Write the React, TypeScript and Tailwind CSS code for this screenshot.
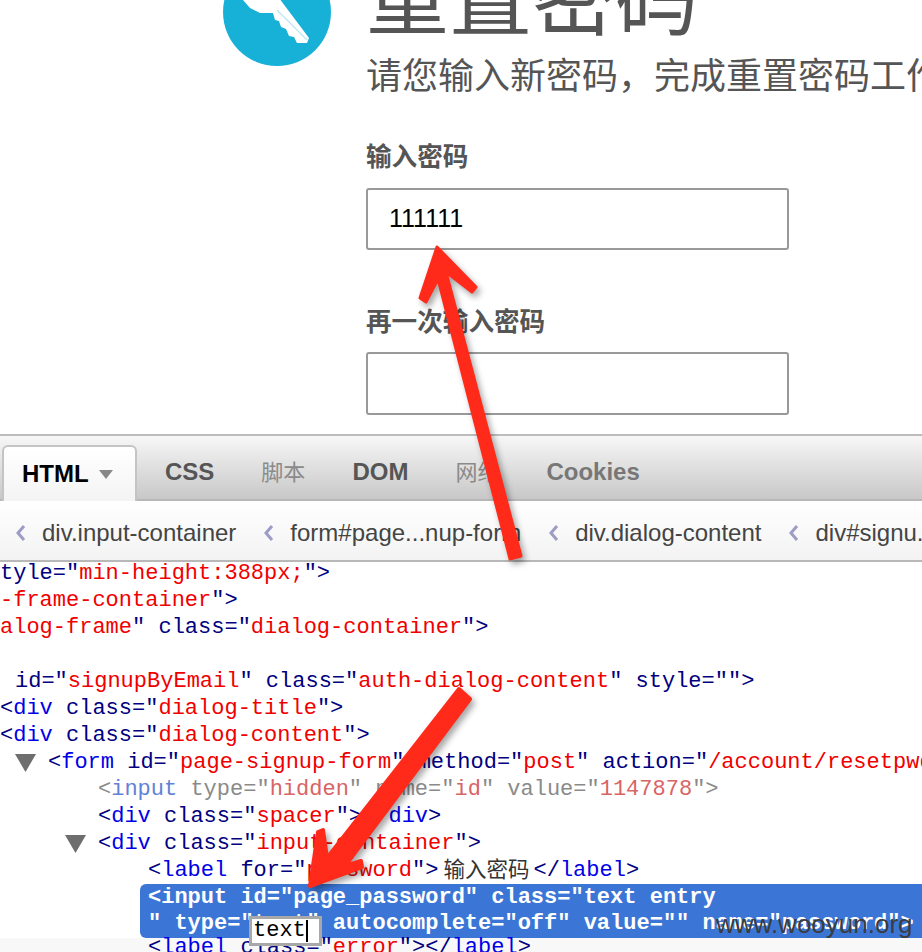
const sans = "font-['Liberation_Sans','Noto_Sans_CJK_SC',sans-serif]"

// colour helpers for the html panel
const Br = ({ children }: { children: React.ReactNode }) => <span className="text-[#000080]">{children}</span>
const Tag = ({ children }: { children: React.ReactNode }) => <span className="text-[#0000e8]">{children}</span>
const Val = ({ children }: { children: React.ReactNode }) => <span className="text-[#f00000]">{children}</span>

function Crumb({ label }: { label: string }) {
  return (
    <div className="flex items-center gap-[16px] shrink-0">
      <svg width="10" height="16" viewBox="0 0 10 16" className="shrink-0">
        <path d="M8 1 L2 8 L8 15" fill="none" stroke="#9c9cc4" strokeWidth="3" />
      </svg>
      <span>{label}</span>
    </div>
  )
}

function Triangle() {
  return (
    <svg width="21" height="18" viewBox="0 0 21 18" className="absolute left-[65px] top-[5px]">
      <path d="M0 0 H21 L10.5 18 Z" fill="#6e6e6e" />
    </svg>
  )
}

function Row({ indent, children }: { indent: string; children?: React.ReactNode }) {
  return <div className={`h-[27px] leading-[27px] whitespace-pre ${indent}`}>{children}</div>
}

export default function App() {
  return (
    <div className={`relative w-[922px] h-[952px] overflow-hidden bg-white ${sans}`}>
      {/* Reset password form */}
      <div className="flex h-[476px] pl-[223px] mt-[-42px]">
        <svg width="108" height="108" viewBox="223 -42 108 108" className="shrink-0">
          <circle cx="277" cy="12" r="54" fill="#17b0d6" />
          <path
            d="M236 -14 L243 0 L250 8 L260 13 L273 13 L275 20 L279 21 L281 27 L286 29 L289 36 L294 37 L297 43 L307 43 L309 38 L288 10 L282 2 L270 -14 Z"
            fill="#ffffff"
          />
          <path d="M277 10 L307 40" stroke="#bfe8f3" strokeWidth="1.5" />
        </svg>
        <div className="ml-[-108px] pl-[143px] flex flex-col w-[699px] shrink-0">
          <h1 className="text-[83px] leading-[82px] mt-[2px] text-[#555] font-normal whitespace-nowrap">重置密码</h1>
          <p className="text-[36px] leading-[44px] mt-[13px] text-[#555] whitespace-nowrap">请您输入新密码，完成重置密码工作</p>
          <label className="text-[25.6px] leading-[34px] mt-[41px] text-[#555] font-bold whitespace-nowrap">输入密码</label>
          <div className="mt-[14px] w-[423px] h-[62px] shrink-0 border-2 border-[#999] rounded-[3px] pl-[21px] flex items-center text-[25px] text-black">111111</div>
          <label className="text-[25.6px] leading-[34px] mt-[55px] text-[#555] font-bold whitespace-nowrap">再一次输入密码</label>
          <div className="mt-[13px] w-[423px] h-[63px] shrink-0 border-2 border-[#999] rounded-[3px]" />
        </div>
      </div>

      {/* Firebug tab bar */}
      <div className="h-[67px] border-t-2 border-b-2 border-t-[#bdbdbd] border-b-[#b8b8b8] bg-gradient-to-b from-[#f7f7f7] to-[#c8c8c8] flex items-end pl-[2px]">
        <div className="relative mb-[-2px] h-[56px] w-[135px] rounded-t-[6px] border-2 border-b-0 border-[#c4c4c4] bg-gradient-to-b from-white to-[#f4f4f4] flex items-center pl-[18px] gap-[10px]">
          <span className="text-[24px] font-bold text-black">HTML</span>
          <span className="w-0 h-0 border-l-[7px] border-r-[7px] border-t-[9px] border-l-transparent border-r-transparent border-t-[#888]" />
        </div>
        <div className="flex h-[54px] items-center text-[24px] font-bold ml-[28px] gap-[47px] text-[#555]">
          <span>CSS</span>
          <span className="text-[22px] font-normal text-[#8a8a8a]">脚本</span>
          <span>DOM</span>
          <span className="text-[22px] font-normal text-[#8a8a8a]">网络</span>
          <span className="text-[#777]">Cookies</span>
        </div>
      </div>

      {/* Breadcrumbs */}
      <div className="h-[61px] border-b-2 border-b-[#b8b8b8] bg-gradient-to-b from-white to-[#f3f3f3] flex items-center pl-[16px] pt-[4px] gap-[28px] text-[24px] text-[#444] whitespace-nowrap overflow-hidden">
        <Crumb label="div.input-container" />
        <Crumb label="form#page...nup-form" />
        <Crumb label="div.dialog-content" />
        <Crumb label="div#signu..." />
      </div>

      {/* Html tree */}
      <div className="mt-[-2px] text-[22px] font-['Liberation_Mono','Noto_Sans_CJK_SC',monospace]">
        <Row indent="pl-0"><Br>tyle=&quot;</Br><Val>min-height:388px;</Val><Br>&quot;&gt;</Br></Row>
        <Row indent="pl-0"><Val>-frame-container</Val><Br>&quot;&gt;</Br></Row>
        <Row indent="pl-0"><Val>alog-frame</Val><Br>&quot; class=&quot;</Br><Val>dialog-container</Val><Br>&quot;&gt;</Br></Row>
        <Row indent="pl-0" />
        <Row indent="pl-[15px]"><Br>id=&quot;</Br><Val>signupByEmail</Val><Br>&quot; class=&quot;</Br><Val>auth-dialog-content</Val><Br>&quot; style=&quot;&quot;&gt;</Br></Row>
        <Row indent="pl-0"><Br>&lt;</Br><Tag>div</Tag><Br> class=&quot;</Br><Val>dialog-title</Val><Br>&quot;&gt;</Br></Row>
        <Row indent="pl-0"><Br>&lt;</Br><Tag>div</Tag><Br> class=&quot;</Br><Val>dialog-content</Val><Br>&quot;&gt;</Br></Row>
        <div className="relative">
          <svg width="21" height="18" viewBox="0 0 21 18" className="absolute left-[15px] top-[5px]">
            <path d="M0 0 H21 L10.5 18 Z" fill="#6e6e6e" />
          </svg>
          <Row indent="pl-[48px]"><Br>&lt;</Br><Tag>form</Tag><Br> id=&quot;</Br><Val>page-signup-form</Val><Br>&quot; method=&quot;</Br><Val>post</Val><Br>&quot; action=&quot;</Br><Val>/account/resetpwd</Val></Row>
        </div>
        <Row indent="pl-[98px]">
          <span className="text-[#8a8a8a]">&lt;</span><span className="text-[#5f82d8]">input</span>
          <span className="text-[#8a8a8a]"> type=&quot;</span><span className="text-[#d86464]">hidden</span>
          <span className="text-[#8a8a8a]">&quot; name=&quot;</span><span className="text-[#d86464]">id</span>
          <span className="text-[#8a8a8a]">&quot; value=&quot;</span><span className="text-[#d86464]">1147878</span>
          <span className="text-[#8a8a8a]">&quot;&gt;</span>
        </Row>
        <Row indent="pl-[98px]"><Br>&lt;</Br><Tag>div</Tag><Br> class=&quot;</Br><Val>spacer</Val><Br>&quot;&gt;&lt;/</Br><Tag>div</Tag><Br>&gt;</Br></Row>
        <div className="relative">
          <Triangle />
          <Row indent="pl-[98px]"><Br>&lt;</Br><Tag>div</Tag><Br> class=&quot;</Br><Val>input-container</Val><Br>&quot;&gt;</Br></Row>
        </div>
        <div className="h-[27px] leading-[27px] whitespace-pre pl-[148px] flex items-center">
          <Br>&lt;</Br><Tag>label</Tag><Br> for=&quot;</Br><Val>password</Val><Br>&quot;&gt;</Br>
          <span className={`ml-[5px] mr-[4px] text-[21.5px] leading-[27px] text-[#333] ${sans}`}>输入密码</span>
          <Br>&lt;/</Br><Tag>label</Tag><Br>&gt;</Br>
        </div>
        <div className="ml-[140px] h-[54px] pl-[8px] rounded-l-[6px] bg-[#3b76d6] text-white font-bold">
          <div className="h-[27px] leading-[27px] whitespace-pre">&lt;input id=&quot;page_password&quot; class=&quot;text entry</div>
          <div className="h-[27px] leading-[26px] whitespace-pre">&quot; type=&quot;text&quot; autocomplete=&quot;off&quot; value=&quot;&quot; name=&quot;password&quot;&gt;</div>
        </div>
        <div className="bg-[#f8f8f8]">
          <div className="h-[27px] leading-[20px] whitespace-pre pl-[148px]"><Br>&lt;</Br><Tag>label</Tag><Br> class=&quot;</Br><Val>error</Val><Br>&quot;&gt;&lt;/</Br><Tag>label</Tag><Br>&gt;</Br></div>
        </div>
      </div>

      {/* Inline edit box on the type attribute */}
      <div className="absolute left-[249px] top-[916px] w-[73px] h-[30px] border-[3px] border-[#a8a8a8] bg-white pl-[1px] flex items-center text-[22px] leading-none text-black font-['Liberation_Mono',monospace]">
        text<span className="w-[2px] h-[22px] bg-black" />
      </div>

      {/* Annotation arrows */}
      <svg width="922" height="952" viewBox="0 0 922 952" className="absolute left-0 top-0 pointer-events-none drop-shadow-[3px_4px_3px_rgba(0,0,0,0.35)]">
        <path
          d="M437 247 L476 287 L472 292 L446 272 L521 556 L510 559 L438 279 L426 302 L420 298 Z"
          fill="#ff2a1a"
          stroke="#ff2a1a"
          strokeWidth="3"
          strokeLinejoin="round"
        />
        <path
          d="M310 886 L318 832 L323 830 L327 858 L459 689 L470 699 L345 866 L361 861 L362 867 Z"
          fill="#ff2a1a"
          stroke="#ff2a1a"
          strokeWidth="4"
          strokeLinejoin="round"
        />
      </svg>

      {/* Watermark */}
      <div className="absolute left-[716px] top-[908px] text-[26px] leading-[32px] text-[#3c3c3c] whitespace-nowrap">www.wooyun.org</div>
    </div>
  )
}
